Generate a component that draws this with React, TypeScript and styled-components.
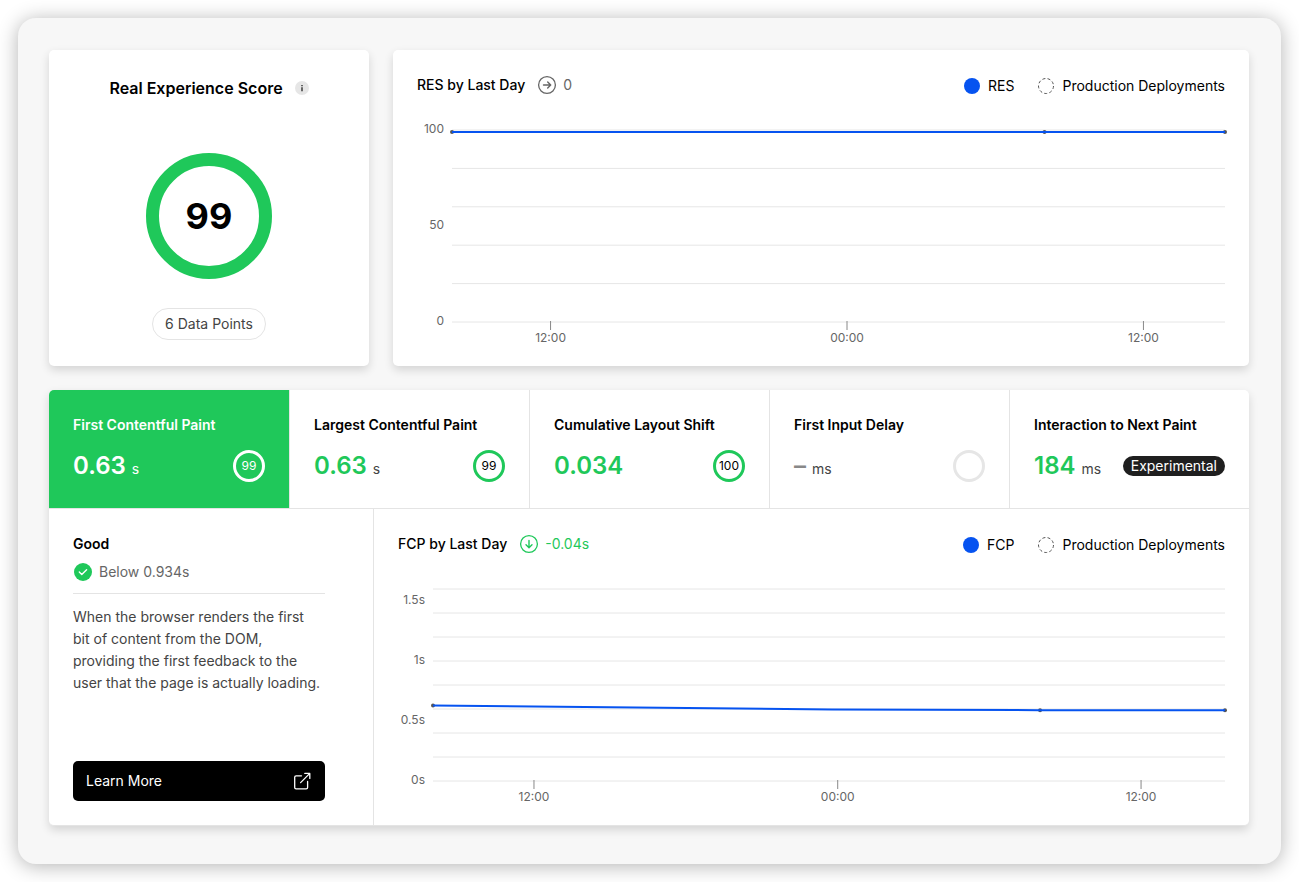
import React, { useState } from 'react';
import styled, { createGlobalStyle } from 'styled-components';

const GREEN = '#1fc85a';
const BLUE = '#0653f0';
const LINE = '#e4e4e4';

const GlobalStyle = createGlobalStyle`
  *, *::before, *::after { box-sizing: border-box; }
  body {
    margin: 0;
    background: #fff;
    color: #000;
    font-family: Inter, "Liberation Sans", sans-serif;
    font-size: 14px;
    line-height: 22px;
  }
  h2, h3, p { margin: 0; }
  button { font: inherit; color: inherit; }
`;

const Page = styled.div`
  padding: 18px;
`;

const Panel = styled.main`
  display: flex;
  flex-direction: column;
  gap: 24px;
  padding: 32px 32px 38px 31px;
  border-radius: 18px;
  background: #f7f7f7;
  box-shadow: 0 2px 20px rgba(0, 0, 0, 0.3);
`;

const TopRow = styled.div`
  display: grid;
  grid-template-columns: 320px minmax(0, 1fr);
  gap: 24px;
`;

const Card = styled.section`
  background: #fff;
  border-radius: 5px;
  box-shadow: 0 4px 10px rgba(0, 0, 0, 0.14);
`;

const MetricsCard = styled(Card)`
  border-bottom: 1px solid ${LINE};
`;

const ScoreCard = styled(Card)`
  display: flex;
  flex-direction: column;
  align-items: center;
  padding: 26px 24px;
`;

const ScoreTitle = styled.h2`
  display: flex;
  align-items: center;
  gap: 12px;
  font-size: 16px;
  font-weight: 600;
  line-height: 24px;
`;

const IconButton = styled.button`
  display: flex;
  padding: 0;
  border: 0;
  background: none;
`;

const BigRing = styled.div`
  display: grid;
  place-items: center;
  width: 126px;
  height: 126px;
  margin: 53px 0 29px;
  border: 13px solid ${GREEN};
  border-radius: 50%;
  font-size: 36px;
  font-weight: 700;
  line-height: 40px;
`;

const Pill = styled.span`
  padding: 4px 12px;
  border: 1px solid #e4e4e4;
  border-radius: 16px;
  color: #444;
`;

const ChartCard = styled(Card)`
  padding: 24px;
`;

const ChartHeader = styled.header`
  display: flex;
  justify-content: space-between;
  align-items: flex-start;
  height: 24px;
`;

const ChartTitle = styled.h3`
  display: flex;
  align-items: center;
  gap: 12px;
  font-size: 14px;
  font-weight: 500;
  line-height: 22px;
`;

const Change = styled.span<{ $tone: string }>`
  display: flex;
  align-items: center;
  gap: 6px;
  font-weight: 400;
  color: ${(p) => p.$tone};
`;

const Legend = styled.div`
  display: flex;
  gap: 24px;
  line-height: 24px;
`;

const LegendItem = styled.span`
  display: flex;
  align-items: center;
  gap: 8px;
`;

const ChartBody = styled.div`
  display: flex;
  gap: 8px;
  margin-top: 32px;
`;

const AxisSvg = styled.svg`
  display: block;
  flex: none;
  width: 27px;
  overflow: visible;
`;

const PlotSvg = styled.svg`
  display: block;
  flex: 1;
  min-width: 0;
  overflow: visible;
`;

const AxisText = styled.text`
  font-size: 12px;
  fill: #666;
`;

const Tabs = styled.div`
  display: grid;
  grid-template-columns: repeat(5, minmax(0, 1fr));
  border-bottom: 1px solid ${LINE};
`;

const Tab = styled.button<{ $active: boolean }>`
  display: flex;
  flex-direction: column;
  gap: 14px;
  padding: 24px 24px 26px;
  border: 0;
  border-left: 1px solid ${LINE};
  background: ${(p) => (p.$active ? GREEN : 'transparent')};
  color: ${(p) => (p.$active ? '#fff' : '#000')};
  text-align: left;
  cursor: pointer;

  &:first-child {
    border-left: 0;
    border-top-left-radius: 5px;
  }
`;

const TabTitle = styled.span`
  font-weight: 600;
`;

const TabRow = styled.span`
  display: flex;
  align-items: center;
  justify-content: space-between;
  width: 100%;
  height: 32px;
`;

const Reading = styled.span`
  display: flex;
  align-items: baseline;
  gap: 6px;
`;

const Value = styled.span<{ $active: boolean; $empty: boolean }>`
  font-size: 24px;
  font-weight: 600;
  line-height: 32px;
  color: ${(p) => (p.$active ? '#fff' : p.$empty ? '#888' : GREEN)};
`;

const Unit = styled.span<{ $active: boolean }>`
  color: ${(p) => (p.$active ? '#fff' : '#444')};
`;

const Ring = styled.span<{ $color: string }>`
  display: grid;
  place-items: center;
  width: 32px;
  height: 32px;
  border: 3px solid ${(p) => p.$color};
  border-radius: 50%;
  font-size: 12px;
  line-height: 16px;
`;

const Badge = styled.span`
  padding: 0 8px;
  border-radius: 10px;
  background: #1f1f1f;
  color: #fff;
  line-height: 20px;
`;

const Details = styled.div`
  display: grid;
  grid-template-columns: 325px minmax(0, 1fr);
`;

const Summary = styled.div`
  display: flex;
  flex-direction: column;
  padding: 24px 48px 24px 24px;
  border-right: 1px solid ${LINE};
`;

const Grade = styled.h3`
  font-size: 14px;
  font-weight: 600;
  line-height: 22px;
`;

const Threshold = styled.p`
  display: flex;
  align-items: center;
  gap: 6px;
  padding: 6px 0 10px;
  border-bottom: 1px solid ${LINE};
  color: #666;
`;

const Description = styled.p`
  margin: 12px 0 67px;
  padding-right: 4px;
  color: #444;
`;

const LearnMore = styled.a`
  display: flex;
  align-items: center;
  justify-content: space-between;
  height: 40px;
  margin-top: auto;
  padding: 0 13px;
  border-radius: 5px;
  background: #000;
  color: #fff;
  text-decoration: none;
`;

const DetailChart = styled.div`
  padding: 24px;
`;

const InfoIcon = () => (
  <svg width="14" height="14" viewBox="0 0 14 14">
    <circle cx="7" cy="7" r="7" fill="#e6e6e6" />
    <path d="M6 4h2v1.3H6zM6 6.3h2v4H6z" fill="#666" />
  </svg>
);

const ArrowIcon = ({ down = false }: { down?: boolean }) => (
  <svg width="20" height="20" viewBox="0 0 20 20" fill="none" stroke="currentColor" strokeLinecap="round" strokeLinejoin="round">
    <circle cx="10" cy="10" r="8.4" strokeWidth="1.3" />
    <path
      d={down ? 'M10 6.5v7M7 10.7l3 3 3-3' : 'M6.5 10h7M10.7 7l3 3-3 3'}
      strokeWidth="1.4"
    />
  </svg>
);

const CheckIcon = () => (
  <svg width="20" height="20" viewBox="0 0 20 20">
    <circle cx="10" cy="10" r="9" fill={GREEN} />
    <path d="M6.3 10.1l2.5 2.4 4.8-4.8" fill="none" stroke="#fff" strokeWidth="1.4" strokeLinecap="round" strokeLinejoin="round" />
  </svg>
);

const ExternalIcon = () => (
  <svg width="20" height="20" viewBox="0 0 20 20" fill="none" stroke="#fff" strokeWidth="1.3" strokeLinecap="round" strokeLinejoin="round">
    <path d="M15.6 10.5v5.9a1.4 1.4 0 0 1-1.4 1.4H4.1a1.4 1.4 0 0 1-1.4-1.4V6.2a1.4 1.4 0 0 1 1.4-1.4H9.5" />
    <path d="M12.8 2.4h5v5M17.8 2.4L8.6 11.6" />
  </svg>
);

const SolidDot = () => (
  <svg width="16" height="16" viewBox="0 0 16 16">
    <circle cx="8" cy="8" r="8" fill={BLUE} />
  </svg>
);

const DashedDot = () => (
  <svg width="16" height="16" viewBox="0 0 16 16">
    <circle cx="8" cy="8" r="7.5" fill="none" stroke="#555" strokeDasharray="3 2.24" />
  </svg>
);

type Mark = { at: number; text: string };

interface ChartProps {
  height: number;
  grid: number[];
  yMarks: Mark[];
  xMarks: Mark[];
  path: string;
  points: [number, number][];
}

/* Horizontal positions are percentages, so the plot stretches with its card. */
const Chart = ({ height, grid, yMarks, xMarks, path, points }: ChartProps) => (
  <>
    <AxisSvg height={height + 20}>
      {yMarks.map((m) => (
        <AxisText key={m.text} x="100%" y={m.at} textAnchor="end">{m.text}</AxisText>
      ))}
    </AxisSvg>
    <PlotSvg height={height + 20}>
      {grid.map((y) => (
        <line key={y} x1="0" x2="100%" y1={y} y2={y} stroke="#e6e6e6" />
      ))}
      {xMarks.map((m) => (
        <g key={m.at}>
          <line x1={`${m.at}%`} x2={`${m.at}%`} y1={height - 1} y2={height + 8} stroke="#888" />
          <AxisText x={`${m.at}%`} y={height + 20} textAnchor="middle">{m.text}</AxisText>
        </g>
      ))}
      {points.map(([x, y]) => (
        <circle key={x} cx={`${x}%`} cy={y} r="2" fill="#555" />
      ))}
      <svg width="100%" height={height} viewBox={`0 0 1000 ${height}`} preserveAspectRatio="none" overflow="visible">
        <path d={path} fill="none" stroke={BLUE} strokeWidth="2" vectorEffect="non-scaling-stroke" />
      </svg>
    </PlotSvg>
  </>
);

const ChartHead = ({ name, change, down, tone }: { name: string; change: string; down?: boolean; tone: string }) => (
  <ChartHeader>
    <ChartTitle>
      {name} by Last Day
      <Change $tone={tone}>
        <ArrowIcon down={down} />
        {change}
      </Change>
    </ChartTitle>
    <Legend>
      <LegendItem><SolidDot />{name}</LegendItem>
      <LegendItem><DashedDot />Production Deployments</LegendItem>
    </Legend>
  </ChartHeader>
);

const metrics = [
  { title: 'First Contentful Paint', value: '0.63', unit: 's', score: '99' },
  { title: 'Largest Contentful Paint', value: '0.63', unit: 's', score: '99' },
  { title: 'Cumulative Layout Shift', value: '0.034', unit: '', score: '100' },
  { title: 'First Input Delay', value: '', unit: 'ms', score: '' },
  { title: 'Interaction to Next Paint', value: '184', unit: 'ms', score: '', badge: 'Experimental' },
];

export default function App() {
  const [current, setCurrent] = useState(0);

  return (
    <Page>
      <GlobalStyle />
      <Panel>
        <TopRow>
          <ScoreCard>
            <ScoreTitle>
              Real Experience Score
              <IconButton type="button" aria-label="About this score"><InfoIcon /></IconButton>
            </ScoreTitle>
            <BigRing>99</BigRing>
            <Pill>6 Data Points</Pill>
          </ScoreCard>
          <ChartCard>
            <ChartHead name="RES" change="0" tone="#666" />
            <ChartBody>
              <Chart
                height={192}
                grid={[0, 38.4, 76.8, 115.2, 153.6, 192]}
                yMarks={[{ at: 3, text: '100' }, { at: 99, text: '50' }, { at: 195, text: '0' }]}
                xMarks={[{ at: 12.75, text: '12:00' }, { at: 51.1, text: '00:00' }, { at: 89.45, text: '12:00' }]}
                path="M0 1.9H1000"
                points={[[0, 1.9], [76.65, 1.9], [100, 1.9]]}
              />
            </ChartBody>
          </ChartCard>
        </TopRow>
        <MetricsCard>
          <Tabs>
            {metrics.map((m, i) => {
              const active = i === current;
              return (
                <Tab key={m.title} type="button" $active={active} aria-pressed={active} onClick={() => setCurrent(i)}>
                  <TabTitle>{m.title}</TabTitle>
                  <TabRow>
                    <Reading>
                      <Value $active={active} $empty={!m.value}>{m.value || '–'}</Value>
                      {m.unit && <Unit $active={active}>{m.unit}</Unit>}
                    </Reading>
                    {m.badge ? (
                      <Badge>{m.badge}</Badge>
                    ) : (
                      <Ring $color={active ? '#fff' : m.score ? GREEN : '#e6e6e6'}>{m.score}</Ring>
                    )}
                  </TabRow>
                </Tab>
              );
            })}
          </Tabs>
          <Details>
            <Summary>
              <Grade>Good</Grade>
              <Threshold><CheckIcon />Below 0.934s</Threshold>
              <Description>
                When the browser renders the first bit of content from the DOM, providing the first
                feedback to the user that the page is actually loading.
              </Description>
              <LearnMore href="#learn-more">Learn More<ExternalIcon /></LearnMore>
            </Summary>
            <DetailChart>
              <ChartHead name="FCP" change="-0.04s" tone={GREEN} down />
              <ChartBody>
                <Chart
                  height={192}
                  grid={[0, 24, 48, 72, 96, 120, 144, 168, 192]}
                  yMarks={[{ at: 15, text: '1.5s' }, { at: 75, text: '1s' }, { at: 135, text: '0.5s' }, { at: 195, text: '0s' }]}
                  xMarks={[{ at: 12.75, text: '12:00' }, { at: 51.1, text: '00:00' }, { at: 89.4, text: '12:00' }]}
                  path="M0 116.4C255 118.8 511 121.2 766.5 121.2H1000"
                  points={[[0, 116.4], [76.65, 121.2], [100, 121.2]]}
                />
              </ChartBody>
            </DetailChart>
          </Details>
        </MetricsCard>
      </Panel>
    </Page>
  );
}
